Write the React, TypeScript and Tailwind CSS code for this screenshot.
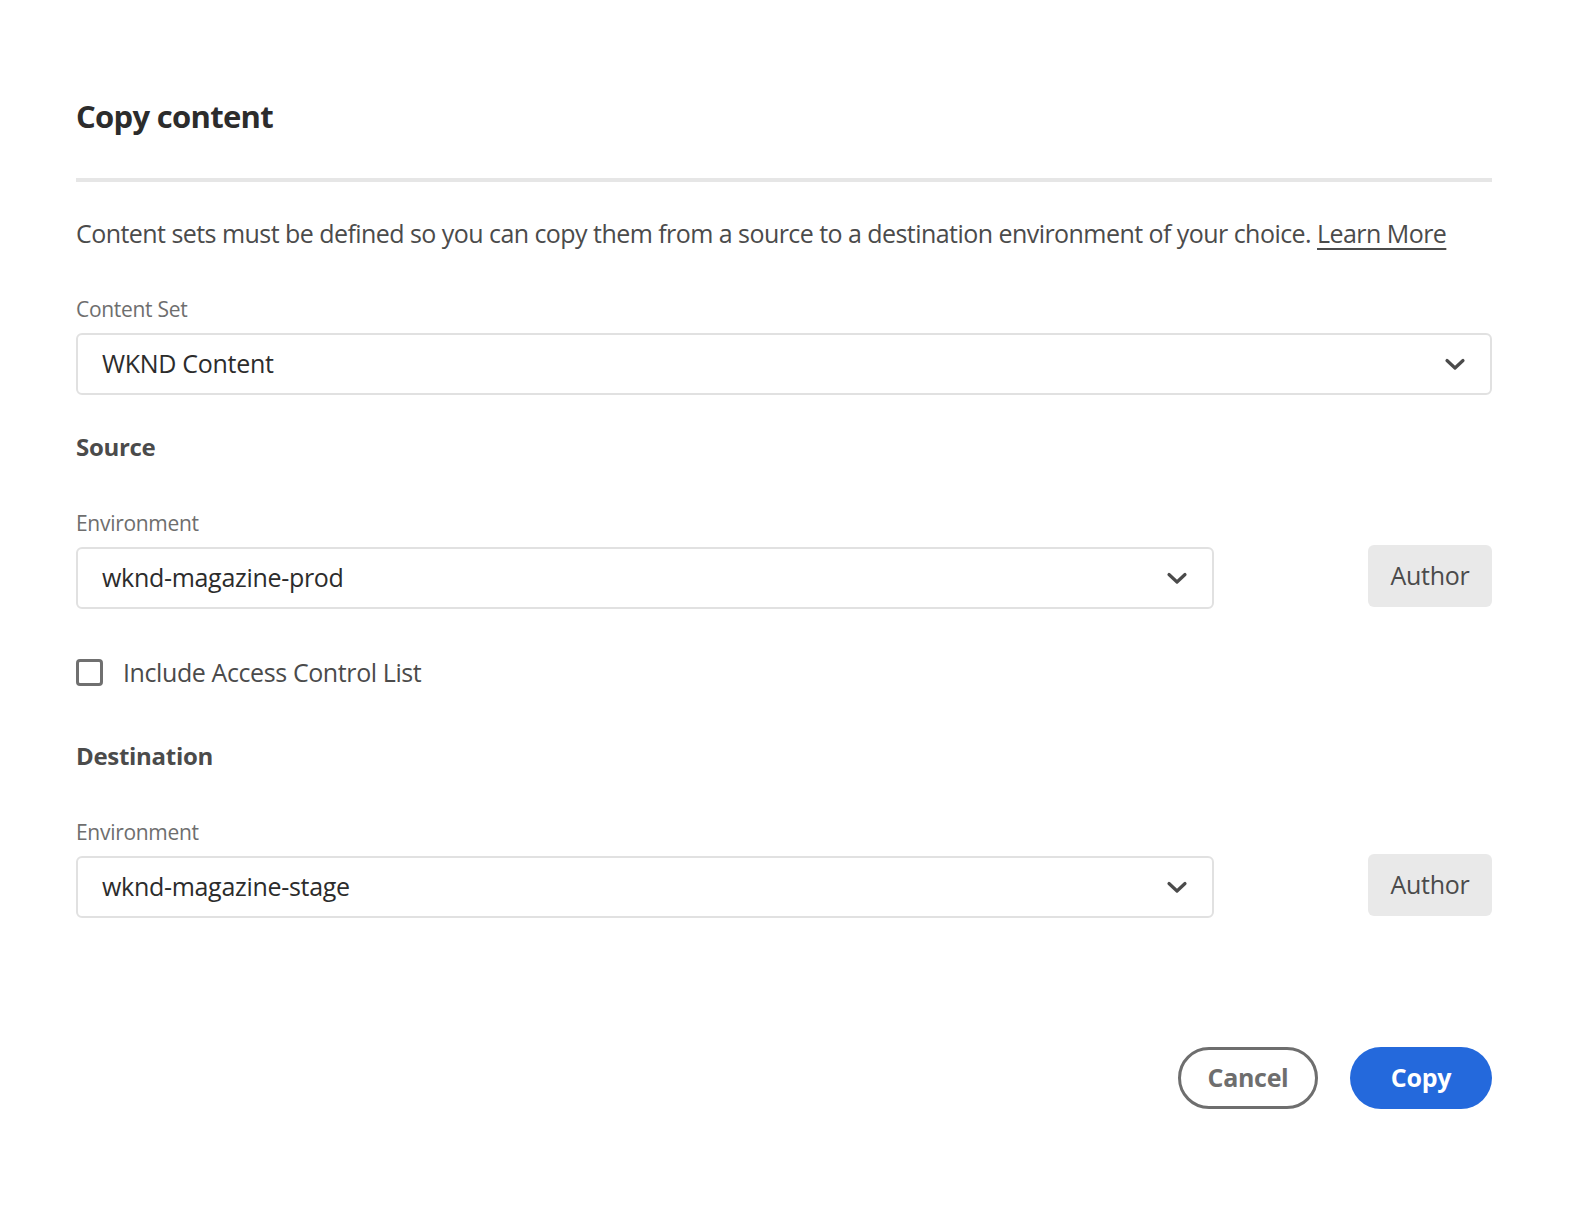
import React from "react";

const font = { fontFamily: "'Open Sans', 'Noto Sans', sans-serif" };

function Chevron() {
  return (
    <svg width="22" height="14" viewBox="0 0 22 14" className="text-[#4b4b4b]">
      <path
        d="M3 3.5 L11 11 L19 3.5"
        fill="none"
        stroke="currentColor"
        strokeWidth="3.2"
        strokeLinecap="round"
        strokeLinejoin="round"
      />
    </svg>
  );
}

function Select({ value, className = "" }: { value: string; className?: string }) {
  return (
    <div
      className={`h-[62px] border-2 border-[#e1e1e1] rounded-[6px] flex items-center justify-between pl-[24px] pr-[24px] ${className}`}
    >
      <span className="text-[25px] text-[#2c2c2c] tracking-[-0.3px]">{value}</span>
      <Chevron />
    </div>
  );
}

function EnvRow({ value }: { value: string }) {
  return (
    <div className="flex items-start justify-between">
      <Select value={value} className="w-[1138px] mt-[2px]" />
      <button className="h-[62px] w-[124px] rounded-[6px] bg-[#e9e9e9] text-[25px] text-[#4b4b4b] tracking-[-0.3px]">
        Author
      </button>
    </div>
  );
}

export default function App() {
  return (
    <div className="h-[1206px] overflow-hidden bg-white" style={font}>
      <div className="pl-[76px] pr-[102px] pt-[96px]">
        <h1 className="text-[31px] leading-[40px] font-bold text-[#2c2c2c] tracking-[-0.7px]">
          Copy content
        </h1>
        <div className="mt-[42px] h-[4px] bg-[#e6e6e6]" />
        <p className="mt-[33px] text-[25px] leading-[36px] text-[#4b4b4b] tracking-[-0.55px]">
          Content sets must be defined so you can copy them from a source to a destination
          environment of your choice.{" "}
          <a href="#" className="underline underline-offset-[5px] decoration-[2px]">
            Learn More
          </a>
        </p>

        <div className="mt-[43px] text-[21px] leading-[30px] text-[#6e6e6e] tracking-[-0.3px]">
          Content Set
        </div>
        <Select value="WKND Content" className="mt-[9px]" />

        <h2 className="mt-[36px] text-[24px] leading-[32px] font-bold text-[#4b4b4b] tracking-[-0.3px]">
          Source
        </h2>
        <div className="mt-[45px] text-[21px] leading-[30px] text-[#6e6e6e] tracking-[-0.3px]">
          Environment
        </div>
        <div className="mt-[7px]">
          <EnvRow value="wknd-magazine-prod" />
        </div>

        <label className="mt-[49px] flex items-center gap-[20px]">
          <span className="w-[27px] h-[27px] border-[3px] border-[#707070] rounded-[4px] bg-white" />
          <span className="text-[25px] leading-[28px] text-[#4b4b4b] tracking-[-0.4px]">
            Include Access Control List
          </span>
        </label>

        <h2 className="mt-[54px] text-[24px] leading-[32px] font-bold text-[#4b4b4b] tracking-[-0.3px]">
          Destination
        </h2>
        <div className="mt-[45px] text-[21px] leading-[30px] text-[#6e6e6e] tracking-[-0.3px]">
          Environment
        </div>
        <div className="mt-[7px]">
          <EnvRow value="wknd-magazine-stage" />
        </div>

        <div className="mt-[129px] flex justify-end gap-[32px]">
          <button className="h-[62px] w-[140px] rounded-full border-[3px] border-[#6e6e6e] text-[25px] font-bold text-[#6e6e6e] tracking-[-0.3px]">
            Cancel
          </button>
          <button className="h-[62px] w-[142px] rounded-full bg-[#2469dc] text-[25px] font-bold text-white tracking-[-0.3px]">
            Copy
          </button>
        </div>
      </div>
    </div>
  );
}
